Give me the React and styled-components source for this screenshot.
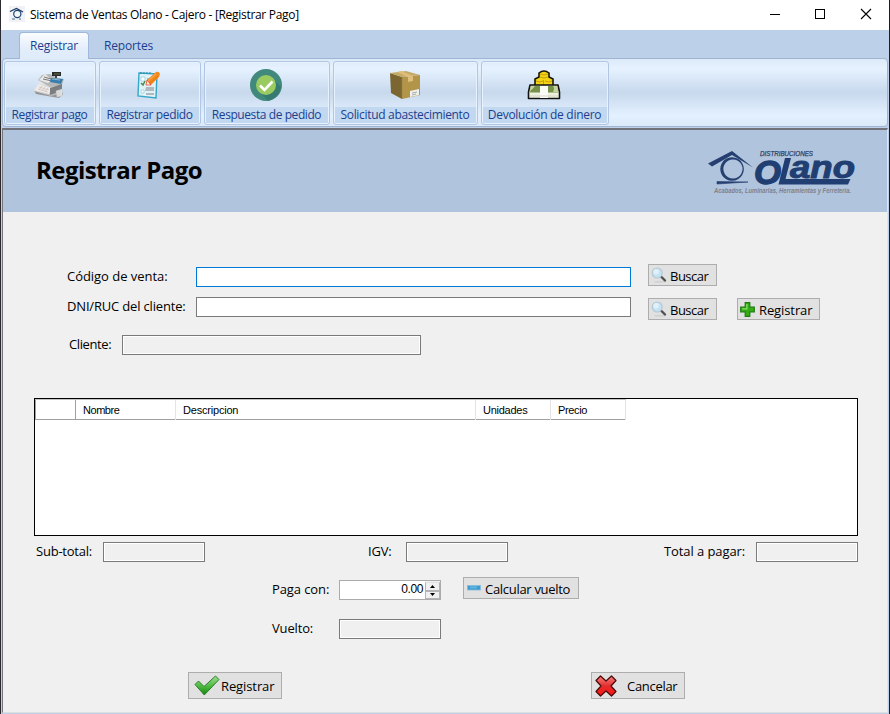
import React from 'react';
import styled, { createGlobalStyle } from 'styled-components';

const Global = createGlobalStyle`
  * { box-sizing: border-box; }
  body { margin: 0; font-family: "Open Sans", "Noto Sans", sans-serif; color: #000; }
`;

const Window = styled.div`
  width: 890px;
  height: 714px;
  display: flex;
  flex-direction: column;
  background: #bdd0e9;
  border-left: 1px solid #2b2a2e;
  border-right: 1px solid #1d1c1f;
  overflow: hidden;
`;

const TitleBar = styled.header`
  height: 30px;
  flex: none;
  display: flex;
  align-items: center;
  background: #fff;
  padding: 0 17px 2px 8px;
`;

const WindowTitle = styled.span`
  flex: 1;
  margin-left: 5px;
  padding-top: 2px;
  font-size: 12px;
  line-height: 16px;
  letter-spacing: -0.3px;
  white-space: pre;
`;

const WindowControls = styled.div`
  display: flex;
  align-items: center;
  gap: 34px;
`;

const Tabs = styled.nav`
  height: 29px;
  flex: none;
  display: flex;
  align-items: flex-end;
  padding-left: 18px;
  position: relative;
  z-index: 1;
`;

const Tab = styled.div`
  width: ${p => p.$w}px;
  height: 27px;
  padding: 4px 0 0 ${p => p.$pad}px;
  border: 1px solid ${p => (p.$active ? '#9fb8dc' : 'transparent')};
  border-bottom: 0;
  border-radius: 4px 4px 0 0;
  background: ${p => (p.$active ? 'linear-gradient(#fafcff, #e4eefb 60%, #deebf9)' : 'none')};
  color: #1b3f8f;
  font-size: 12px;
  line-height: 18px;
  letter-spacing: ${p => p.$ls || 0}px;
`;

const Ribbon = styled.div`
  height: 69px;
  flex: none;
  margin: -1px 1px 1px 1px;
  display: flex;
  gap: 3px;
  padding: 2px 2px 2px 1px;
  border: 1px solid #9fb5d2;
  border-radius: 4px;
  background: linear-gradient(#dce9f8 0, #e6f2ff 14%, #c8d9ed 50%, #e3f0ff 84%, #dce9f8 100%);
`;

const RibbonGroup = styled.div`
  width: ${p => p.$w}px;
  height: 64px;
  display: flex;
  flex-direction: column;
  border: 1px solid #b1c6e3;
  border-radius: 3px;
  box-shadow: inset 0 0 0 1px #e8f2fd;
  overflow: hidden;
`;

const GroupIcon = styled.div`
  flex: 1;
  display: flex;
  align-items: center;
  justify-content: center;
  padding: 1px 2px 0 0;
`;

const GroupLabel = styled.div`
  height: 16px;
  margin: 0 1px 1px;
  padding-right: 1px;
  background: #c2d8f0;
  color: #1b3f8f;
  font-size: 12px;
  line-height: 15px;
  text-align: center;
  white-space: pre;
  letter-spacing: ${p => p.$ls}px;
`;

const Client = styled.main`
  flex: 1;
  margin: 0 1px 1px;
  border-top: 2px solid #72737a;
  border-left: 1px solid #77777b;
  border-right: 1px solid #e3e3e3;
  border-bottom: 1px solid #dfdfdf;
  background: #f0f0f0;
`;

const Banner = styled.section`
  height: 82px;
  display: flex;
  align-items: center;
  justify-content: space-between;
  background: #b0c4de;
  padding: 0 31px 0 33px;
`;

const Heading = styled.h1`
  margin: 0;
  padding-bottom: 3px;
  font-size: 24px;
  font-weight: 700;
  line-height: 30px;
  letter-spacing: -0.56px;
`;

const Row = styled.div`
  display: flex;
  align-items: flex-start;
  margin-top: ${p => p.$top || 0}px;
  height: ${p => p.$h}px;
  padding-left: ${p => p.$left}px;
`;

const Label = styled.label`
  width: ${p => p.$w}px;
  flex: none;
  margin-top: ${p => p.$drop ?? -1}px;
  font-size: 13px;
  line-height: 20px;
  white-space: pre;
  letter-spacing: ${p => p.$ls || 0}px;
`;

const TextBox = styled.input`
  width: ${p => p.$w}px;
  height: 20px;
  flex: none;
  margin: ${p => p.$drop || 0}px 0 0;
  padding: 0 3px;
  outline: 0;
  border: 1px solid ${p => (p.$active ? '#0078d7' : '#7a7a7a')};
  border-radius: 0;
  background: ${p => (p.readOnly ? '#f0f0f0' : '#fff')};
  box-shadow: inset 0 0 0 1px #fff;
`;

const Button = styled.button`
  width: ${p => p.$w}px;
  height: ${p => p.$h || 22}px;
  flex: none;
  margin: 0 0 0 ${p => p.$gap || 0}px;
  padding: 0 0 0 ${p => p.$pad ?? 3}px;
  display: flex;
  align-items: center;
  gap: ${p => p.$space || 3}px;
  border: 1px solid #adadad;
  background: #e1e1e1;
  font: 13px/18px "Open Sans", "Noto Sans", sans-serif;
  color: #000;
  letter-spacing: ${p => p.$ls || 0}px;
  white-space: pre;

  svg { flex: none; }
`;

const ButtonText = styled.span`
  padding-top: ${p => p.$drop ?? 2}px;
`;

const Grid = styled.div`
  width: 824px;
  height: 138px;
  margin: 43px 0 0 31px;
  border: 1px solid #000;
  background: #fff;
`;

const GridHeader = styled.div`
  display: grid;
  grid-template-columns: 41px 100px 300px 75px 75px;
  width: 591px;
  height: 21px;
  border-top: 1px solid #c4c4c4;
  border-bottom: 1px solid #a0a0a0;
`;

const HeaderCell = styled.div`
  border-right: 1px solid ${p => (p.$corner ? '#a0a0a0' : '#e3e3e3')};
  border-left: ${p => (p.$corner ? '1px solid #a0a0a0' : '0')};
  padding-left: 7px;
  font: 11px/20px "Liberation Sans", Arial, sans-serif;
  letter-spacing: ${p => p.$ls || 0}px;
`;

const Spinner = styled.div`
  width: 102px;
  height: 20px;
  margin: 3px 22px 0 0;
  display: flex;
  border: 1px solid #ababab;
  background: #fff;
`;

const SpinnerValue = styled.span`
  flex: 1;
  text-align: right;
  font: 12px/17px "Liberation Sans", Arial, sans-serif;
  letter-spacing: -0.4px;
  padding-right: 2px;
`;

const SpinnerButtons = styled.div`
  width: 15px;
  display: flex;
  flex-direction: column;
  background: #f0f0f0;
  padding-top: 1px;
`;

const SpinnerButton = styled.span`
  flex: 1;
  display: flex;
  align-items: center;
  justify-content: center;
  border: 1px solid #b4b4b4;
  border-top-color: ${p => (p.$up ? '#e3e3e3' : '#b4b4b4')};
`;

const AppIcon = () => (
  <svg width="16" height="16" viewBox="0 0 16 16">
    <rect width="16" height="16" fill="#f0f2f5" />
    <path d="M1 5.5L7.5 2.5L14 6" fill="none" stroke="#1c3a66" strokeWidth="1.3" />
    <circle cx="8.3" cy="8" r="3.6" fill="#f3f6fa" stroke="#1c4470" strokeWidth="1.2" />
    <path d="M3 13H6M10 13H12" stroke="#49698e" />
  </svg>
);

const MinimizeIcon = () => (
  <svg width="12" height="12"><path d="M1 6.5H11" stroke="#000" /></svg>
);
const MaximizeIcon = () => (
  <svg width="11" height="11"><rect x=".5" y=".5" width="9" height="9" fill="none" stroke="#000" /></svg>
);
const CloseIcon = () => (
  <svg width="12" height="12"><path d="M1 1L11 11M11 1L1 11" stroke="#000" strokeWidth="1.1" /></svg>
);

const RegisterIcon = () => (
  <svg width="32" height="28" viewBox="0 0 32 28">
    <defs>
      <linearGradient id="till" x1="0" y1="0" x2="1" y2="1">
        <stop offset="0" stopColor="#f5f5f5" /><stop offset="1" stopColor="#adadad" />
      </linearGradient>
    </defs>
    <path d="M1 19L7 13L27 18L30 23L26 27L3 23Z" fill="#949494" />
    <path d="M1 18L8 10L28 14L26 23L18 25L1 20Z" fill="url(#till)" />
    <path d="M5 9L9 4L17 3L24 7L31 8L29 14L17 16Z" fill="#b5b7b8" />
    <path d="M6 9L12 3L19 9L15 12Z" fill="#e9e9e7" />
    <path d="M10 8L19 10M11 6L18 8" stroke="#777" />
    <path d="M18 7L30 8L28 13L17 11Z" fill="#377eaf" />
    <path d="M19 8L27 9" stroke="#8cb8d2" />
    <path d="M19 1H28V5H19Z" fill="#292c29" />
    <path d="M21 3H27" stroke="#68704f" /><path d="M23 5V7" stroke="#444" strokeWidth="2" />
    <path d="M6 14L18 17L16 23L2 19Z" fill="#f0eeec" />
    <path d="M6 16L16 19M5 18L15 21M9 15L6 19M12 16L9 20M15 17L12 21" stroke="#cbbbb6" strokeWidth=".7" />
    <path d="M17 17L29 13L29 20L17 24Z" fill="#7b7e80" />
    <path d="M23 20L29 18L29 25L24 26Z" fill="#f7f7f7" stroke="#b9b9b9" strokeWidth=".6" />
    <path d="M25 20V25M27 19V25" stroke="#999" strokeWidth=".6" />
  </svg>
);

const OrderIcon = () => (
  <svg width="24" height="28" viewBox="0 0 24 28">
    <path d="M2 2L20 3L19 27L1 25Z" fill="#dff2f8" stroke="#35a6c6" strokeWidth="1.4" />
    <path d="M4 3V1M7 3V1M10 3V1M13 3V1" stroke="#2789a7" />
    <path d="M4 6H8V10H4ZM4 19H7V22H4Z" fill="#fff" stroke="#8accdc" strokeWidth=".7" />
    <path d="M4 12L6 14L8 10" stroke="#458d50" strokeWidth="1.5" fill="none" />
    <path d="M9 16H17V20H8ZM9 22H17V24H9Z" fill="#b2b9bd" />
    <path d="M10 7H15V9H10Z" fill="#91bdcf" />
    <path d="M9 14L10 9L19 1Q22 0 23 3L22 6L14 14Z" fill="#f38a1e" />
    <path d="M9 14L10 9L14 14Z" fill="#fff0dc" stroke="#e73722" strokeWidth=".7" />
    <path d="M11 10L19 3" stroke="#ffb15a" />
    <path d="M13 12L21 5" stroke="#e9790e" />
  </svg>
);

const ApprovedIcon = () => (
  <svg width="32" height="32" viewBox="0 0 32 32">
    <circle cx="16" cy="16" r="16" fill="#40897c" />
    <path d="M22 9L31 18Q29 29 18 32L9 22Z" fill="#367a70" />
    <circle cx="16" cy="16" r="10" fill="#9acb60" />
    <path d="M10 16.5L14.5 21L22.5 12.5" fill="none" stroke="#fff" strokeWidth="2.6" />
  </svg>
);

const BoxIcon = () => (
  <svg width="32" height="30" viewBox="0 0 32 30">
    <path d="M1 3L13 7V29L2 23Z" fill="#7b6631" />
    <path d="M13 7L31 5V25L13 29Z" fill="#b29549" />
    <path d="M1 3L17 1L31 5L13 7Z" fill="#c4aa64" />
    <path d="M8 2L12 1L24 6V11L19 12V7Z" fill="#dfbd7b" />
    <path d="M21 21L30 19V25L21 27Z" fill="#f0f0ed" />
    <path d="M23 23L28 22M23 25L27 24" stroke="#989b98" strokeWidth=".8" />
    <path d="M13 7V29" stroke="#98803d" strokeWidth=".6" />
  </svg>
);

const MoneyIcon = () => (
  <svg width="34" height="30" viewBox="0 0 34 30">
    <path d="M8 16V9L12 7V3Q17-1 22 3V7L26 9V16Z" fill="#f5d416" stroke="#171500" strokeWidth="1.6" />
    <path d="M13 4Q17 6 21 4M13 7Q17 9 21 7M9 11Q13 13 16 11M18 11Q22 13 25 11M16.5 10V15" fill="none" stroke="#c79f08" />
    <path d="M3 15H31L32.5 22V28.5H1.5V22Z" fill="#eef0df" stroke="#111" strokeWidth="1.6" strokeLinejoin="round" />
    <path d="M4 16H30L31 22.5H3Z" fill="#759047" />
    <path d="M4 16L3 21Q6 19 8 16ZM30 16L31 22H26Q28 18 26 16Z" fill="#c5d39f" />
    <path d="M13 16H21V28H13Z" fill="#fafaf7" />
    <path d="M3 26H31" stroke="#c9ccbb" strokeWidth=".7" />
  </svg>
);

const SearchIcon = () => (
  <svg width="16" height="16" viewBox="0 0 16 16">
    <ellipse cx="9" cy="14.7" rx="6" ry="1" fill="#d2d2d2" />
    <path d="M10 9.5L14 13.5" stroke="#505050" strokeWidth="2.4" strokeLinecap="round" />
    <circle cx="6.2" cy="6" r="5" fill="#c5e2f3" stroke="#b4c6d0" strokeWidth="1.1" />
    <circle cx="5.1" cy="4.7" r="2.7" fill="#e1f1fa" />
  </svg>
);

const PlusIcon = () => (
  <svg width="15" height="15" viewBox="0 0 15 15">
    <path d="M5.2.7H9.8V5.2H14.3V9.8H9.8V14.3H5.2V9.8H.7V5.2H5.2Z" fill="#34ac17" stroke="#217c10" strokeWidth="1.2" />
    <path d="M6.2 2V6.2H2V7.5H7.5V2Z" fill="#88df65" />
  </svg>
);

const MinusIcon = () => (
  <svg width="14" height="6" viewBox="0 0 14 6">
    <rect x=".5" y=".5" width="13" height="4.5" fill="#3e9bd0" stroke="#8abbd5" strokeWidth=".8" />
    <rect x="3" y="1.4" width="7" height="2" fill="#5bb6e3" />
  </svg>
);

const CheckIcon = () => (
  <svg width="27" height="21" viewBox="0 0 27 21">
    <defs><linearGradient id="check" x2="0" y2="1"><stop stopColor="#9edf91" /><stop offset=".55" stopColor="#4cb83e" /><stop offset="1" stopColor="#16850c" /></linearGradient></defs>
    <path d="M2 9.5L5.5 6L11 11.5L22.5 1L26 4.5L11.3 20Z" fill="url(#check)" stroke="#2e7d2e" strokeLinejoin="round" />
  </svg>
);

const CancelIcon = () => (
  <svg width="22" height="22" viewBox="0 0 22 22">
    <defs><linearGradient id="cancel" x2="0" y2="1"><stop stopColor="#f78383" /><stop offset=".5" stopColor="#e32d2d" /><stop offset="1" stopColor="#ff1212" /></linearGradient></defs>
    <path d="M5.5 1L11 6L16.5 1L21 5.5L16 11L21 16.5L16.5 21L11 16L5.5 21L1 16.5L6 11L1 5.5Z" fill="url(#cancel)" stroke="#4a0808" strokeWidth="1.2" strokeLinejoin="round" />
  </svg>
);

const Arrow = ({ up }) => (
  <svg width="5" height="3"><path d={up ? 'M0 3L2.5 0L5 3Z' : 'M0 0L2.5 3L5 0Z'} fill="#000" /></svg>
);

const Logo = () => (
  <svg width="148" height="54" viewBox="0 -7 148 54" overflow="visible">
    <path d="M0 12.5L24 0L45 16.5L24 4L4 15.5Z" fill="#253f70" />
    <path d="M24 6.2A11.8 11.8 0 1 0 24.1 6.2ZM25 8.4A9.6 9.6 0 1 1 24.9 8.4Z" fill="#253f70" fillRule="evenodd" />
    <path d="M9 30.5L40 31L9 33Z" fill="#253f70" stroke="#253f70" strokeWidth=".6" />
    <g fontFamily="Liberation Sans, Arial, sans-serif" fontStyle="italic">
      <text x="52" y="5" fontSize="6.3" fill="#2f4365" stroke="#2f4365" strokeWidth=".25" textLength="53" lengthAdjust="spacingAndGlyphs">DISTRIBUCIONES</text>
      <g fontWeight="700" fill="#213e72" stroke="#213e72">
        <text x="46" y="32.5" fontSize="34" strokeWidth="1.3" textLength="27" lengthAdjust="spacingAndGlyphs">O</text>
        <text x="82" y="26.5" fontSize="32" strokeWidth="1" textLength="65" lengthAdjust="spacingAndGlyphs">ano</text>
      </g>
      <path d="M77 7H83L77.5 28H142.5L140 33.5H70.5Z" fill="#213e72" />
      <text x="6" y="42" fontSize="6.4" fontWeight="700" fill="#7f8089" textLength="137" lengthAdjust="spacingAndGlyphs">Acabados, Luminarias, Herramientas y Ferretería.</text>
    </g>
  </svg>
);

const GROUPS = [
  { label: 'Registrar pago', w: 92, ls: -0.36, Icon: RegisterIcon },
  { label: 'Registrar pedido', w: 102, ls: -0.38, Icon: OrderIcon },
  { label: 'Respuesta de pedido', w: 126, ls: -0.42, Icon: ApprovedIcon },
  { label: 'Solicitud abastecimiento', w: 145, ls: -0.32, Icon: BoxIcon },
  { label: 'Devolución de dinero', w: 128, ls: -0.3, Icon: MoneyIcon },
];

export default function App() {
  return (
    <>
      <Global />
      <Window>
        <TitleBar>
          <AppIcon />
          <WindowTitle>Sistema de Ventas Olano - Cajero - [Registrar Pago]</WindowTitle>
          <WindowControls><MinimizeIcon /><MaximizeIcon /><CloseIcon /></WindowControls>
        </TitleBar>
        <Tabs>
          <Tab $active $w={70} $pad={10} $ls={-0.25}>Registrar</Tab>
          <Tab $w={80} $pad={14} $ls={-0.15}>Reportes</Tab>
        </Tabs>
        <Ribbon>
          {GROUPS.map(({ label, w, ls, Icon }) => (
            <RibbonGroup key={label} $w={w}>
              <GroupIcon><Icon /></GroupIcon>
              <GroupLabel $ls={ls}>{label}</GroupLabel>
            </RibbonGroup>
          ))}
        </Ribbon>
        <Client>
          <Banner>
            <Heading>Registrar Pago</Heading>
            <Logo />
          </Banner>
          <Row $top={52} $h={34} $left={64}>
            <Label $w={129} $drop={2} $ls={-0.04}>Código de venta:</Label>
            <TextBox $w={435} $drop={3} $active />
            <Button $w={69} $gap={17} $pad={2} $ls={-0.5}><SearchIcon /><ButtonText>Buscar</ButtonText></Button>
          </Row>
          <Row $h={22} $left={64}>
            <Label $w={129} $drop={-2} $ls={-0.17}>DNI/RUC del cliente:</Label>
            <TextBox $w={435} $drop={-1} />
            <Button $w={69} $gap={17} $pad={2} $ls={-0.5}><SearchIcon /><ButtonText>Buscar</ButtonText></Button>
            <Button $w={83} $gap={20} $pad={2} $space={4} $ls={-0.1}><PlusIcon /><ButtonText>Registrar</ButtonText></Button>
          </Row>
          <Row $top={15} $h={20} $left={66}>
            <Label $w={53} $ls={-0.4}>Cliente:</Label>
            <TextBox $w={299} readOnly />
          </Row>
          <Grid>
            <GridHeader>
              <HeaderCell $corner />
              <HeaderCell $ls={-0.45}>Nombre</HeaderCell>
              <HeaderCell $ls={-0.2}>Descripcion</HeaderCell>
              <HeaderCell $ls={-0.25}>Unidades</HeaderCell>
              <HeaderCell $ls={-0.35}>Precio</HeaderCell>
            </GridHeader>
          </Grid>
          <Row $top={6} $h={20} $left={33}>
            <Label $w={67} $ls={-0.22}>Sub-total:</Label>
            <TextBox $w={102} readOnly />
            <Label as="span" $w={163} />
            <Label $w={38} $ls={-0.2}>IGV:</Label>
            <TextBox $w={102} readOnly />
            <Label as="span" $w={156} />
            <Label $w={92} $ls={-0.08}>Total a pagar:</Label>
            <TextBox $w={102} readOnly />
          </Row>
          <Row $top={15} $h={27} $left={269}>
            <Label $w={67} $drop={2} $ls={-0.1}>Paga con:</Label>
            <Spinner>
              <SpinnerValue>0.00</SpinnerValue>
              <SpinnerButtons>
                <SpinnerButton $up><Arrow up /></SpinnerButton>
                <SpinnerButton><Arrow /></SpinnerButton>
              </SpinnerButtons>
            </Spinner>
            <Button $w={116} $space={4} $ls={-0.3}><MinusIcon /><ButtonText>Calcular vuelto</ButtonText></Button>
          </Row>
          <Row $top={15} $h={20} $left={269}>
            <Label $w={67} $ls={-0.15}>Vuelto:</Label>
            <TextBox $w={102} readOnly />
          </Row>
          <Row $top={33} $h={27} $left={185}>
            <Button $w={94} $h={27} $pad={4} $space={1} $ls={-0.1}><CheckIcon /><ButtonText $drop={1}>Registrar</ButtonText></Button>
            <Button $w={94} $h={27} $gap={309} $pad={3} $space={10} $ls={-0.3}><CancelIcon /><ButtonText $drop={1}>Cancelar</ButtonText></Button>
          </Row>
        </Client>
      </Window>
    </>
  );
}
